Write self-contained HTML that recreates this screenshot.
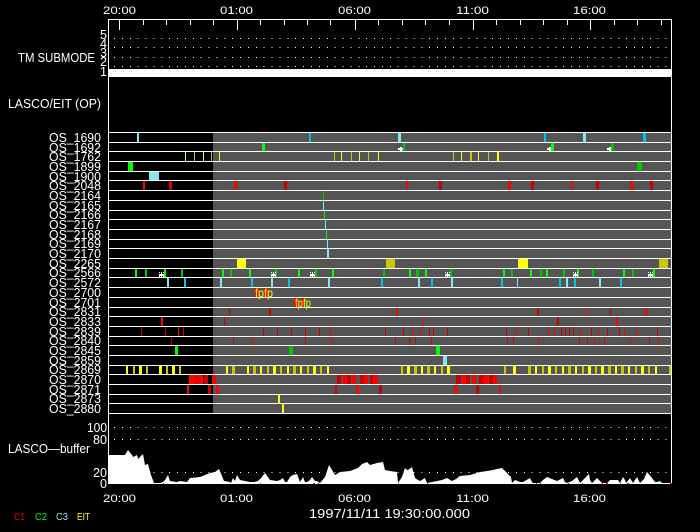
<!DOCTYPE html>
<html><head><meta charset="utf-8"><style>
html,body{margin:0;padding:0;background:#000;width:700px;height:532px;overflow:hidden}
svg{display:block}
text{font-family:"Liberation Sans",sans-serif;fill:#fff}
rect{shape-rendering:crispEdges}
.a rect{height:9px}.b rect{height:8px}
.Y{fill:#ff0}.D{fill:#c8c800}.G{fill:#0f0}.H{fill:#00c800}.R{fill:#f00}.S{fill:#c80000}.L{fill:#8ae6ee}.C{fill:#00c4ea}
.w{stroke:#fff;stroke-width:1;shape-rendering:crispEdges;fill:none}
.dot{stroke:#fff;stroke-width:1;stroke-dasharray:1 6.88;shape-rendering:crispEdges;fill:none}
</style></head><body>
<svg width="700" height="532" viewBox="0 0 700 532" xmlns="http://www.w3.org/2000/svg">
<rect x="213" y="132" width="458" height="281" fill="#555"/>

<!-- rows -->
<g class="a" transform="translate(0 133)"><rect class="L" x="137" width="2"/><rect class="C" x="309" width="2"/><rect class="L" x="398" width="3"/><rect class="C" x="544" width="2"/><rect class="L" x="583" width="3"/><rect class="C" x="643" width="3"/></g>
<g class="b" transform="translate(0 143)"><rect class="G" x="262" width="3"/><rect class="H" x="403" width="2"/><rect class="G" x="551" width="3"/><rect class="H" x="611" width="3"/></g>
<path fill="#fff" shape-rendering="crispEdges" d="M398 148h5v2h-5zM400 147h2v5h-2zM547 148h4v2h-4zM549 147h2v5h-2zM607 148h4v2h-4zM609 147h2v5h-2z"/>
<g class="a" transform="translate(0 152)"><rect class="Y" x="185" width="1"/><rect class="D" x="194" width="1"/><rect class="Y" x="203" width="1"/><rect class="D" x="211" width="1"/><rect class="Y" x="219" width="1"/><rect class="D" x="334" width="1"/><rect class="Y" x="341" width="1"/><rect class="D" x="351" width="1"/><rect class="Y" x="359" width="1"/><rect class="D" x="368" width="1"/><rect class="Y" x="378" width="1"/><rect class="D" x="453" width="1"/><rect class="Y" x="461" width="1"/><rect class="D" x="470" width="2"/><rect class="Y" x="478" width="1"/><rect class="D" x="488" width="1"/><rect class="Y" x="497" width="2"/></g>
<g class="a" transform="translate(0 162)"><rect class="G" x="128" width="5"/><rect class="H" x="637" width="5"/></g>
<g class="b" transform="translate(0 172)"><rect class="L" x="149" width="10"/></g>
<g class="a" transform="translate(0 181)"><rect class="R" x="143" width="2"/><rect class="S" x="169" width="3"/><rect class="R" x="234" width="3"/><rect class="S" x="284" width="3"/><rect class="R" x="406" width="2"/><rect class="S" x="439" width="3"/><rect class="R" x="508" width="3"/><rect class="S" x="531" width="3"/><rect class="R" x="571" width="2"/><rect class="S" x="596" width="3"/><rect class="R" x="630" width="3"/><rect class="S" x="650" width="3"/></g>
<g class="a" transform="translate(0 191)"><rect class="H" x="323" width="1"/></g>
<g class="a" transform="translate(0 201)"><rect class="L" x="323" width="1"/></g>
<g class="b" transform="translate(0 211)"><rect class="G" x="324" width="1"/></g>
<g class="a" transform="translate(0 220)"><rect class="L" x="325" width="1"/></g>
<g class="a" transform="translate(0 230)"><rect class="G" x="326" width="1"/></g>
<g class="b" transform="translate(0 240)"><rect class="L" x="327" width="1"/></g>
<g class="a" transform="translate(0 249)"><rect class="L" x="327" width="2"/></g>
<g class="a" transform="translate(0 259)"><rect class="Y" x="237" width="9"/><rect class="D" x="386" width="9"/><rect class="Y" x="518" width="10"/><rect class="D" x="659" width="9"/></g>
<g class="b" transform="translate(0 269)"><rect class="G" x="135" width="2"/><rect class="H" x="145" width="2"/><rect class="G" x="164" width="2"/><rect class="H" x="181" width="2"/><rect class="G" x="222" width="2"/><rect class="H" x="230" width="2"/><rect class="G" x="249" width="2"/><rect class="H" x="275" width="2"/><rect class="G" x="298" width="2"/><rect class="H" x="315" width="2"/><rect class="G" x="332" width="2"/><rect class="H" x="383" width="2"/><rect class="G" x="409" width="2"/><rect class="H" x="416" width="3"/><rect class="G" x="425" width="2"/><rect class="H" x="450" width="2"/><rect class="G" x="503" width="2"/><rect class="H" x="511" width="2"/><rect class="G" x="530" width="2"/><rect class="H" x="540" width="2"/><rect class="G" x="546" width="2"/><rect class="H" x="563" width="2"/><rect class="G" x="577" width="2"/><rect class="H" x="592" width="2"/><rect class="G" x="623" width="2"/><rect class="H" x="632" width="2"/><rect class="G" x="653" width="2"/></g>
<path fill="#fff" shape-rendering="crispEdges" d="M159 274h5v2h-5zM161 272h1v5h-1zM159 272h1v1h-1zM163 272h1v1h-1zM159 277h1v-1h-1zM163 277h1v-1h-1zM271 274h5v2h-5zM273 272h1v5h-1zM271 272h1v1h-1zM275 272h1v1h-1zM271 277h1v-1h-1zM275 277h1v-1h-1zM310 274h5v2h-5zM312 272h1v5h-1zM310 272h1v1h-1zM314 272h1v1h-1zM310 277h1v-1h-1zM314 277h1v-1h-1zM445 274h5v2h-5zM447 272h1v5h-1zM445 272h1v1h-1zM449 272h1v1h-1zM445 277h1v-1h-1zM449 277h1v-1h-1zM573 274h5v2h-5zM575 272h1v5h-1zM573 272h1v1h-1zM577 272h1v1h-1zM573 277h1v-1h-1zM577 277h1v-1h-1zM648 274h5v2h-5zM650 272h1v5h-1zM648 272h1v1h-1zM652 272h1v1h-1zM648 277h1v-1h-1zM652 277h1v-1h-1z"/>
<g class="a" transform="translate(0 278)"><rect class="L" x="167" width="2"/><rect class="C" x="184" width="2"/><rect class="L" x="220" width="2"/><rect class="C" x="251" width="2"/><rect class="L" x="271" width="2"/><rect class="C" x="288" width="2"/><rect class="L" x="328" width="2"/><rect class="C" x="381" width="2"/><rect class="L" x="418" width="2"/><rect class="C" x="431" width="2"/><rect class="L" x="451" width="2"/><rect class="C" x="501" width="2"/><rect class="L" x="517" width="1"/><rect class="C" x="559" width="2"/><rect class="L" x="566" width="2"/><rect class="C" x="574" width="2"/><rect class="L" x="599" width="2"/><rect class="C" x="620" width="2"/></g>
<g class="a" transform="translate(0 288)"><rect class="R" x="255" width="4"/><rect class="R" x="264" width="4"/></g>
<g class="a" transform="translate(0 298)"><rect class="R" x="294" width="4"/><rect class="R" x="301" width="3"/></g>
<g class="b" transform="translate(0 308)"><rect class="S" x="229" width="1"/><rect class="S" x="269" width="2"/><rect class="R" x="396" width="2"/><rect class="S" x="537" width="2"/><rect class="R" x="586" width="1"/><rect class="S" x="610" width="1"/><rect class="R" x="645" width="2"/></g>
<g class="a" transform="translate(0 317)"><rect class="R" x="161" width="2"/><rect class="S" x="224" width="1"/><rect class="R" x="422" width="1"/><rect class="S" x="557" width="2"/><rect class="R" x="616" width="2"/></g>
<g class="a" transform="translate(0 327)"><rect class="S" x="141" width="1"/><rect class="S" x="165" width="1"/><rect class="R" x="178" width="1"/><rect class="S" x="183" width="1"/><rect class="S" x="263" width="1"/><rect class="S" x="277" width="1"/><rect class="S" x="291" width="1"/><rect class="S" x="305" width="1"/><rect class="S" x="319" width="1"/><rect class="R" x="330" width="1"/><rect class="S" x="385" width="1"/><rect class="S" x="403" width="1"/><rect class="R" x="412" width="1"/><rect class="R" x="420" width="1"/><rect class="S" x="429" width="1"/><rect class="S" x="433" width="1"/><rect class="S" x="447" width="1"/><rect class="S" x="506" width="1"/><rect class="R" x="516" width="1"/><rect class="S" x="528" width="1"/><rect class="R" x="548" width="1"/><rect class="R" x="554" width="1"/><rect class="S" x="561" width="1"/><rect class="S" x="565" width="1"/><rect class="S" x="569" width="1"/><rect class="S" x="573" width="1"/><rect class="R" x="580" width="1"/><rect class="S" x="591" width="1"/><rect class="R" x="598" width="1"/><rect class="S" x="607" width="1"/><rect class="S" x="619" width="1"/><rect class="R" x="624" width="1"/><rect class="R" x="636" width="1"/><rect class="S" x="657" width="1"/></g>
<g class="b" transform="translate(0 337)"><rect class="S" x="171" width="1"/><rect class="S" x="233" width="1"/><rect class="R" x="252" width="1"/><rect class="S" x="305" width="1"/><rect class="R" x="331" width="1"/><rect class="S" x="395" width="1"/><rect class="S" x="409" width="1"/><rect class="S" x="415" width="1"/><rect class="S" x="431" width="1"/><rect class="S" x="507" width="1"/><rect class="S" x="513" width="1"/><rect class="R" x="538" width="1"/><rect class="S" x="579" width="1"/><rect class="S" x="587" width="1"/><rect class="R" x="594" width="1"/><rect class="S" x="604" width="1"/><rect class="R" x="630" width="1"/><rect class="S" x="649" width="1"/><rect class="R" x="658" width="1"/></g>
<g class="a" transform="translate(0 346)"><rect class="G" x="175" width="3"/><rect class="H" x="289" width="4"/><rect class="G" x="436" width="4"/></g>
<g class="a" transform="translate(0 356)"><rect class="L" x="443" width="4"/></g>
<g class="b" transform="translate(0 366)"><rect class="Y" x="126" width="2"/><rect class="D" x="133" width="2"/><rect class="Y" x="139" width="3"/><rect class="D" x="146" width="2"/><rect class="Y" x="159" width="3"/><rect class="D" x="166" width="2"/><rect class="Y" x="172" width="3"/><rect class="D" x="179" width="2"/><rect class="Y" x="226" width="2"/><rect class="D" x="232" width="3"/><rect class="Y" x="247" width="2"/><rect class="D" x="253" width="3"/><rect class="Y" x="260" width="2"/><rect class="D" x="267" width="2"/><rect class="Y" x="273" width="3"/><rect class="D" x="280" width="2"/><rect class="Y" x="287" width="2"/><rect class="D" x="293" width="3"/><rect class="Y" x="300" width="2"/><rect class="D" x="307" width="2"/><rect class="Y" x="313" width="3"/><rect class="D" x="320" width="2"/><rect class="Y" x="327" width="2"/><rect class="D" x="401" width="2"/><rect class="Y" x="407" width="3"/><rect class="D" x="414" width="3"/><rect class="Y" x="421" width="2"/><rect class="D" x="427" width="3"/><rect class="Y" x="434" width="2"/><rect class="D" x="441" width="2"/><rect class="Y" x="447" width="3"/><rect class="D" x="504" width="2"/><rect class="Y" x="513" width="3"/><rect class="D" x="528" width="3"/><rect class="Y" x="535" width="2"/><rect class="D" x="542" width="2"/><rect class="Y" x="548" width="3"/><rect class="D" x="555" width="2"/><rect class="Y" x="562" width="2"/><rect class="D" x="568" width="3"/><rect class="Y" x="575" width="2"/><rect class="D" x="582" width="2"/><rect class="Y" x="588" width="3"/><rect class="D" x="595" width="2"/><rect class="Y" x="601" width="3"/><rect class="D" x="608" width="3"/><rect class="Y" x="615" width="2"/><rect class="D" x="621" width="3"/><rect class="Y" x="628" width="2"/><rect class="D" x="635" width="2"/><rect class="Y" x="641" width="3"/><rect class="D" x="648" width="2"/><rect class="Y" x="655" width="2"/><rect class="D" x="669" width="2"/></g>
<g class="a" transform="translate(0 375)"><rect class="R" x="189" width="5"/><rect fill="#e00000" x="194" width="5"/><rect class="R" x="199" width="4"/><rect class="S" x="204" width="4"/><rect class="R" x="212" width="4"/><rect class="S" x="337" width="4"/><rect class="R" x="343" width="4"/><rect class="S" x="347" width="4"/><rect class="R" x="352" width="4"/><rect class="S" x="360" width="4"/><rect class="R" x="364" width="4"/><rect class="S" x="370" width="3"/><rect class="R" x="373" width="5"/><rect class="S" x="456" width="5"/><rect class="R" x="462" width="4"/><rect class="S" x="466" width="4"/><rect class="R" x="472" width="4"/><rect class="S" x="479" width="5"/><rect class="R" x="484" width="4"/><rect class="S" x="489" width="4"/><rect class="R" x="493" width="4"/></g>
<g class="a" transform="translate(0 385)"><rect class="R" x="187" width="2"/><rect class="S" x="208" width="3"/><rect class="R" x="216" width="3"/><rect class="S" x="335" width="2"/><rect class="R" x="356" width="3"/><rect class="S" x="379" width="3"/><rect class="R" x="454" width="3"/><rect class="S" x="476" width="3"/><rect class="R" x="499" width="2"/></g>
<g class="b" transform="translate(0 395)"><rect class="Y" x="278" width="2"/></g>
<g class="a" transform="translate(0 404)"><rect class="Y" x="282" width="2"/></g>

<!-- horizontal row lines -->
<path class="w" d="M108 132.500H671M108 142.500H671M108 151.500H671M108 161.500H671M108 171.500H671M108 180.500H671M108 190.500H671M108 200.500H671M108 210.500H671M108 219.500H671M108 229.500H671M108 239.500H671M108 248.500H671M108 258.500H671M108 268.500H671M108 277.500H671M108 287.500H671M108 297.500H671M108 307.500H671M108 316.500H671M108 326.500H671M108 336.500H671M108 345.500H671M108 355.500H671M108 365.500H671M108 374.500H671M108 384.500H671M108 394.500H671M108 403.500H671M108 413.500H671"/>

<!-- frame + ticks -->
<path class="w" d="M108.500 19V484M671.500 19V484M108 19.500H672"/>
<path class="w" d="M119.500 20v10M143.500 20v5M166.500 20v5M190.500 20v5M213.500 20v5M237.500 20v10M260.500 20v5M284.500 20v5M307.500 20v5M330.500 20v5M355.500 20v10M378.500 20v5M402.500 20v5M425.500 20v5M449.500 20v5M473.500 20v10M496.500 20v5M520.500 20v5M543.500 20v5M567.500 20v5M590.500 20v10M614.500 20v5M637.500 20v5M661.500 20v5"/>
<rect x="109" y="69" width="563" height="8" fill="#fff"/>

<!-- dotted guides -->
<path class="dot" d="M114 38.500H668M114 47.500H668M114 57.500H668M114 66.500H668M114 427.500H668M114 439.500H668M114 472.500H668"/>

<!-- buffer plot -->
<polygon fill="#fff" points="109,484 109,455 125,455 128,450 132,455 133,457 135,456 137,455 138,459 143,454 145,465 148,464 151,475 154,483 160,483 163,482 165,480 168,475 170,481 177,482 180,481 187,482 190,478 200,477 210,473 215,472 219,469 222,476 224,481 230,482 231,483 233,478 235,481 237,475 240,480 245,481 250,482 254,482 258,481 261,478 265,473 270,480 277,481 280,480 283,478 285,482 287,482 290,477 293,475 297,474 300,482 303,477 305,482 307,482 310,480 312,477 315,481 317,481 320,483 325,477 329,465 332,470 335,475 340,472 350,471 358,468 362,464 367,462 370,465 377,463 383,462 385,470 390,471 397,472 398,483 402,477 405,468 407,470 408,470 412,467 415,478 418,480 420,481 425,478 427,483 432,482 437,481 442,480 447,478 452,481 456,479 460,476 470,475 480,472 487,471 493,470 497,469 502,468 504,470 508,474 511,477 512,483 515,480 520,482 523,482 530,478 532,482 533,483 540,483 543,480 547,477 552,479 557,481 563,478 565,482 567,483 572,481 577,477 579,481 580,483 585,478 587,476 589,474 590,480 592,483 597,478 600,481 602,483 607,483 610,480 618,480 620,483 623,477 625,480 626,483 630,478 633,483 637,477 640,483 644,479 647,472 652,478 655,482 657,482 660,481 662,483 671,483 671,484"/>
<path fill="#f00" d="M163 483h1v1h-1zM260 483h1v1h-1zM313 483h2v1h-2zM318 483h1v1h-1zM398 483h1v1h-1zM427 483h1v1h-1zM536 483h1v1h-1zM540 483h1v1h-1zM568 483h1v1h-1zM582 483h1v1h-1zM602 483h1v1h-1zM606 483h2v1h-2zM620 483h1v1h-1zM627 483h2v1h-2zM670 483h2v1h-2z"/>

<!-- top / bottom time labels -->
<g font-size="11">
<text x="103" y="14" textLength="33" lengthAdjust="spacingAndGlyphs">20:00</text>
<text x="220" y="14" textLength="33" lengthAdjust="spacingAndGlyphs">01:00</text>
<text x="338" y="14" textLength="33" lengthAdjust="spacingAndGlyphs">06:00</text>
<text x="456" y="14" textLength="33" lengthAdjust="spacingAndGlyphs">11:00</text>
<text x="573" y="14" textLength="33" lengthAdjust="spacingAndGlyphs">16:00</text>
<text x="103" y="502" textLength="33" lengthAdjust="spacingAndGlyphs">20:00</text>
<text x="220" y="502" textLength="33" lengthAdjust="spacingAndGlyphs">01:00</text>
<text x="338" y="502" textLength="33" lengthAdjust="spacingAndGlyphs">06:00</text>
<text x="456" y="502" textLength="33" lengthAdjust="spacingAndGlyphs">11:00</text>
<text x="573" y="502" textLength="33" lengthAdjust="spacingAndGlyphs">16:00</text>
</g>
<text x="309" y="518" font-size="12.500" textLength="161" lengthAdjust="spacingAndGlyphs">1997/11/11 19:30:00.000</text>

<!-- y labels -->
<g font-size="12.500">
<text x="18" y="62" textLength="77" lengthAdjust="spacingAndGlyphs">TM SUBMODE</text>
<text x="8" y="108" textLength="93" lengthAdjust="spacingAndGlyphs">LASCO/EIT (OP)</text>
<text x="8" y="453" textLength="82" lengthAdjust="spacingAndGlyphs">LASCO—buffer</text>
<text x="100" y="39" textLength="7" lengthAdjust="spacingAndGlyphs">5</text>
<text x="100" y="48" textLength="7" lengthAdjust="spacingAndGlyphs">4</text>
<text x="100" y="57" textLength="7" lengthAdjust="spacingAndGlyphs">3</text>
<text x="100" y="66" textLength="7" lengthAdjust="spacingAndGlyphs">2</text>
<text x="100" y="76" textLength="7" lengthAdjust="spacingAndGlyphs">1</text>
<text x="87" y="432" textLength="20" lengthAdjust="spacingAndGlyphs">100</text>
<text x="93" y="444" textLength="14" lengthAdjust="spacingAndGlyphs">80</text>
<text x="93" y="477" textLength="14" lengthAdjust="spacingAndGlyphs">20</text>
<text x="100" y="488" textLength="7" lengthAdjust="spacingAndGlyphs">0</text>
</g>

<!-- row labels -->
<g font-size="13">
<text x="49" y="142" textLength="52" lengthAdjust="spacingAndGlyphs">OS_1690</text>
<text x="49" y="152" textLength="52" lengthAdjust="spacingAndGlyphs">OS_1692</text>
<text x="49" y="161" textLength="52" lengthAdjust="spacingAndGlyphs">OS_1762</text>
<text x="49" y="171" textLength="52" lengthAdjust="spacingAndGlyphs">OS_1899</text>
<text x="49" y="181" textLength="52" lengthAdjust="spacingAndGlyphs">OS_1900</text>
<text x="49" y="190" textLength="52" lengthAdjust="spacingAndGlyphs">OS_2048</text>
<text x="49" y="200" textLength="52" lengthAdjust="spacingAndGlyphs">OS_2164</text>
<text x="49" y="210" textLength="52" lengthAdjust="spacingAndGlyphs">OS_2165</text>
<text x="49" y="219" textLength="52" lengthAdjust="spacingAndGlyphs">OS_2166</text>
<text x="49" y="229" textLength="52" lengthAdjust="spacingAndGlyphs">OS_2167</text>
<text x="49" y="239" textLength="52" lengthAdjust="spacingAndGlyphs">OS_2168</text>
<text x="49" y="248" textLength="52" lengthAdjust="spacingAndGlyphs">OS_2169</text>
<text x="49" y="258" textLength="52" lengthAdjust="spacingAndGlyphs">OS_2170</text>
<text x="49" y="268" textLength="52" lengthAdjust="spacingAndGlyphs">OS_2265</text>
<text x="49" y="277" textLength="52" lengthAdjust="spacingAndGlyphs">OS_2566</text>
<text x="49" y="287" textLength="52" lengthAdjust="spacingAndGlyphs">OS_2572</text>
<text x="49" y="297" textLength="52" lengthAdjust="spacingAndGlyphs">OS_2700</text>
<text x="49" y="307" textLength="52" lengthAdjust="spacingAndGlyphs">OS_2701</text>
<text x="49" y="316" textLength="52" lengthAdjust="spacingAndGlyphs">OS_2831</text>
<text x="49" y="326" textLength="52" lengthAdjust="spacingAndGlyphs">OS_2833</text>
<text x="49" y="336" textLength="52" lengthAdjust="spacingAndGlyphs">OS_2839</text>
<text x="49" y="345" textLength="52" lengthAdjust="spacingAndGlyphs">OS_2840</text>
<text x="49" y="355" textLength="52" lengthAdjust="spacingAndGlyphs">OS_2845</text>
<text x="49" y="365" textLength="52" lengthAdjust="spacingAndGlyphs">OS_2859</text>
<text x="49" y="374" textLength="52" lengthAdjust="spacingAndGlyphs">OS_2869</text>
<text x="49" y="384" textLength="52" lengthAdjust="spacingAndGlyphs">OS_2870</text>
<text x="49" y="394" textLength="52" lengthAdjust="spacingAndGlyphs">OS_2871</text>
<text x="49" y="403" textLength="52" lengthAdjust="spacingAndGlyphs">OS_2873</text>
<text x="49" y="413" textLength="52" lengthAdjust="spacingAndGlyphs">OS_2880</text>
</g>

<!-- fp markers -->
<g font-size="12">
<text x="255" y="297" textLength="18" lengthAdjust="spacingAndGlyphs" style="fill:#ff0">fpfp</text>
<text x="295" y="307" textLength="16" lengthAdjust="spacingAndGlyphs" style="fill:#ff0">fpfp</text>
</g>

<!-- legend -->
<g font-size="10">
<text x="14" y="520" textLength="11" lengthAdjust="spacingAndGlyphs" style="fill:#f00">C1</text>
<text x="35" y="520" textLength="12" lengthAdjust="spacingAndGlyphs" style="fill:#0f0">C2</text>
<text x="56" y="520" textLength="12" lengthAdjust="spacingAndGlyphs" style="fill:#8ae6ee">C3</text>
<text x="77" y="520" textLength="13" lengthAdjust="spacingAndGlyphs" style="fill:#ff0">EIT</text>
</g>
</svg>
</body></html>
